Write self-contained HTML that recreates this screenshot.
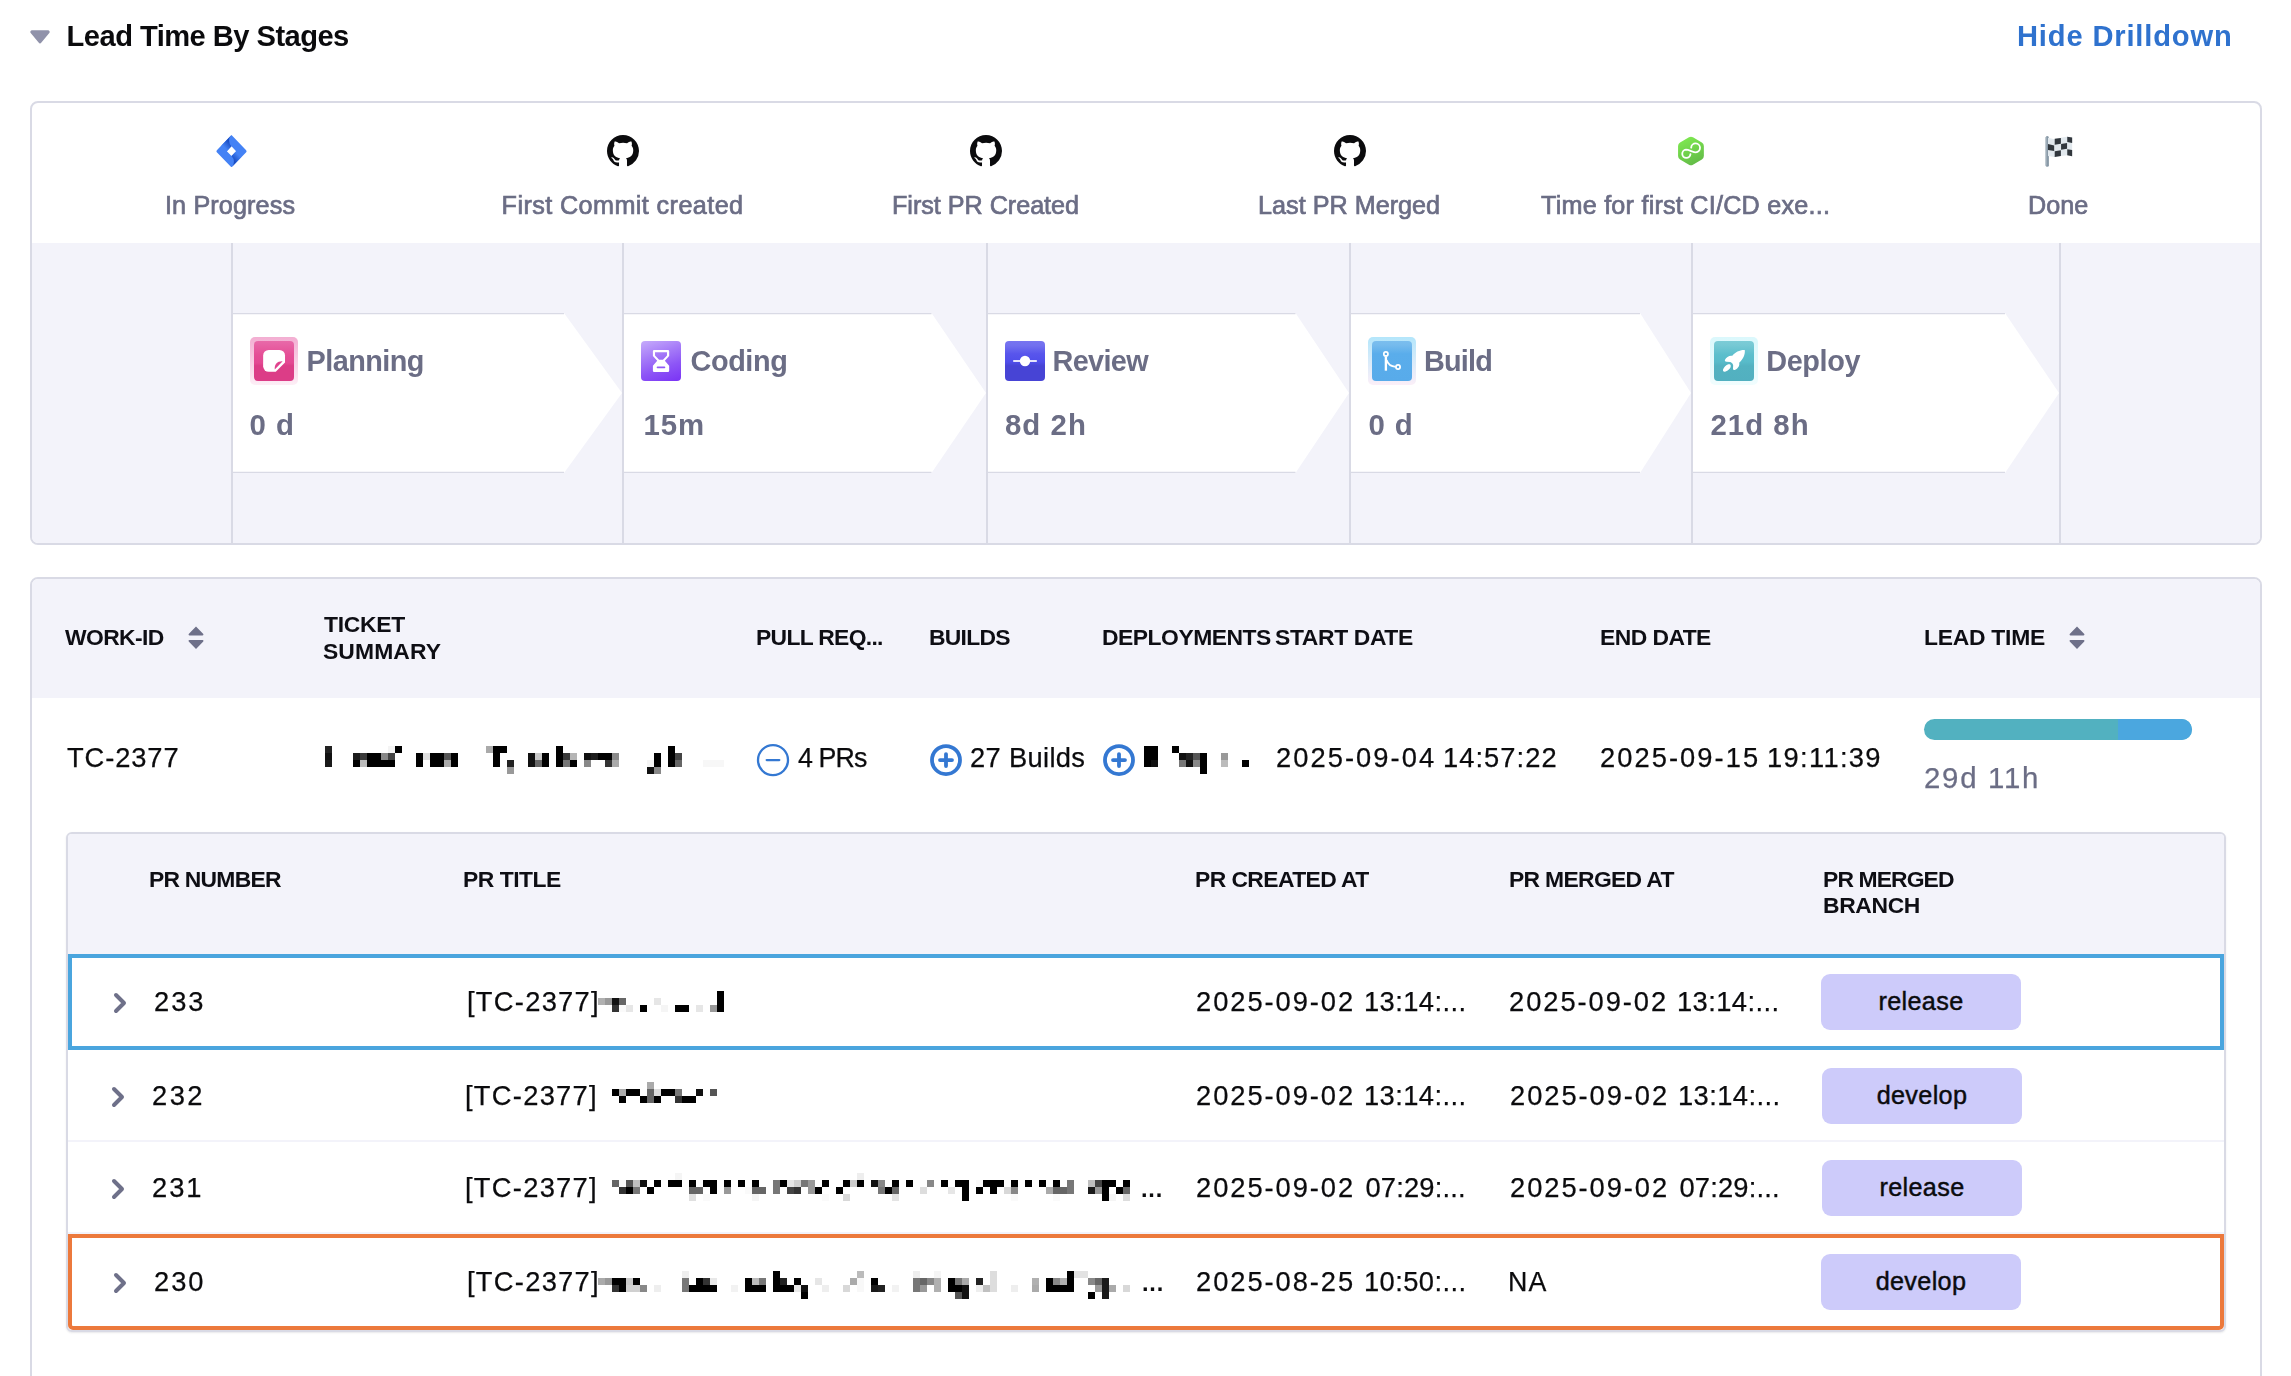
<!DOCTYPE html>
<html lang="en">
<head>
<meta charset="utf-8">
<title>Lead Time By Stages</title>
<style>
html,body{margin:0;padding:0;background:#fff;}
body{width:2291px;height:1376px;overflow:hidden;font-family:"Liberation Sans",sans-serif;}
#root{position:relative;width:2291px;height:1376px;overflow:hidden;background:#fff;}
.abs{position:absolute;}
.t{position:absolute;white-space:nowrap;}
.md{-webkit-text-stroke:0.7px currentColor;}
.rg{-webkit-text-stroke:0.25px currentColor;}
#txt{position:absolute;left:0;top:0;width:2291px;height:1376px;will-change:transform;}
.card{position:absolute;box-sizing:border-box;border:2px solid #d9dae5;border-radius:8px;background:#fff;}
.grey{position:absolute;background:#f3f3fa;}
.vline{position:absolute;width:2px;background:#d9dae5;top:243px;height:300px;}
.stage{position:absolute;top:313px;height:160px;}
.sicon{position:absolute;width:40px;height:40px;border-radius:4px;top:341px;}
.halo{position:absolute;width:48px;height:48px;border-radius:5px;top:337px;}
.badge{position:absolute;width:200px;height:56px;border-radius:9px;background:#cdcbfa;color:#0b0b0d;font-size:25.200px;line-height:55px;text-align:center;letter-spacing:.35px;-webkit-text-stroke:.45px #0b0b0d;}
.rowsep{position:absolute;left:68px;width:2156px;height:2px;background:#f3f3fa;}
</style>
</head>
<body>

<div id="root">
<!-- header caret -->
<svg class="abs" style="left:28px;top:26.400px" width="24" height="22" viewBox="0 0 24 22"><path d="M4 4.200h16a1.700 1.700 0 0 1 1.300 2.800l-7.900 9.600a1.800 1.800 0 0 1-2.800 0l-7.900-9.600a1.700 1.700 0 0 1 1.300-2.800z" fill="#9092aa"/></svg>

<!-- stages card -->
<div class="card" style="left:30px;top:101px;width:2232px;height:444px;overflow:hidden">
</div>
<div class="grey" style="left:32px;top:243px;width:2228px;height:300px;border-radius:0 0 6px 6px"></div>
<div class="vline" style="left:231px"></div>
<div class="vline" style="left:622px"></div>
<div class="vline" style="left:986px"></div>
<div class="vline" style="left:1349px"></div>
<div class="vline" style="left:1691px"></div>
<div class="vline" style="left:2059px"></div>

<!-- stage arrows -->
<svg class="abs" style="left:0;top:0" width="2291" height="560">
 <g fill="#fff" stroke="none">
  <path d="M233 313H564L622 393L564 473H233Z"/>
  <path d="M624 313H931.500L986 393L931.500 473H624Z"/>
  <path d="M988 313H1295.500L1349 393L1295.500 473H988Z"/>
  <path d="M1351 313H1640L1691 393L1640 473H1351Z"/>
  <path d="M1693 313H2005L2059 393L2005 473H1693Z"/>
 </g>
 <g fill="none" stroke="#d9dae5" stroke-width="1.200">
  <path d="M233 313.600H564M233 472.400H564"/>
  <path d="M624 313.600H931.500M624 472.400H931.500"/>
  <path d="M988 313.600H1295.500M988 472.400H1295.500"/>
  <path d="M1351 313.600H1640M1351 472.400H1640"/>
  <path d="M1693 313.600H2005M1693 472.400H2005"/>
 </g>
</svg>

<!-- table card -->
<div class="card" style="left:30px;top:577px;width:2232px;height:820px"></div>
<div class="grey" style="left:32px;top:579px;width:2228px;height:119px;border-radius:6px 6px 0 0"></div>

<!-- nested table -->
<div class="card" style="left:66px;top:832px;width:2160px;height:500px;border-radius:6px;box-shadow:0 1px 2px rgba(40,41,61,.10)"></div>
<div class="grey" style="left:68px;top:834px;width:2156px;height:120px;border-radius:4px 4px 0 0"></div>
<div class="rowsep" style="top:1140px"></div>
<div class="rowsep" style="top:1232px"></div>
<div class="abs" style="left:68px;top:954px;width:2156px;height:96px;box-sizing:border-box;border:4px solid #4aa5de"></div>
<div class="abs" style="left:68px;top:1234px;width:2156px;height:96px;box-sizing:border-box;border:4px solid #ec793c;border-radius:0 0 5px 5px"></div>

<div class="badge" style="left:1821px;top:974px">release</div>
<div class="badge" style="left:1822px;top:1068px">develop</div>
<div class="badge" style="left:1822px;top:1160px">release</div>
<div class="badge" style="left:1821px;top:1254px">develop</div>

<!-- lead time bar -->
<div class="abs" style="left:1924px;top:719px;width:268px;height:21px;border-radius:11px;overflow:hidden;background:#52b1c0"><div class="abs" style="left:194px;top:0;width:74px;height:21px;background:#4ba7df"></div></div>

<!-- Jira icon -->
<svg class="abs" style="left:216px;top:134.500px" width="31" height="32.400" viewBox="0 0 32 32" preserveAspectRatio="none">
 <defs>
  <linearGradient id="jg1" gradientUnits="userSpaceOnUse" x1="15" y1="6.500" x2="9" y2="12.500"><stop offset="0.15" stop-color="#1a4ec4"/><stop offset="1" stop-color="#4482f5"/></linearGradient>
  <linearGradient id="jg2" gradientUnits="userSpaceOnUse" x1="17" y1="25.500" x2="23" y2="19.500"><stop offset="0.15" stop-color="#1a4ec4"/><stop offset="1" stop-color="#4482f5"/></linearGradient>
 </defs>
 <path fill="#4482f5" fill-rule="evenodd" d="M16 0L30.900 14.700a1.850 1.850 0 0 1 0 2.600L16 32L1.100 17.300a1.850 1.850 0 0 1 0-2.600ZM16 11.200L11.200 16L16 20.800L20.800 16Z"/>
 <path fill="url(#jg1)" d="M16 11.200A7.600 7.600 0 0 1 16 0L5.600 10.400L11.200 16Z"/>
 <path fill="url(#jg2)" d="M16 20.800A7.600 7.600 0 0 1 16 32L26.400 21.600L20.800 16Z"/>
</svg>

<!-- GitHub icons -->
<svg class="abs" style="left:606.500px;top:134.700px" width="32" height="32" viewBox="0 0 16 16"><path fill="#0b0b0d" d="M8 0C3.580 0 0 3.580 0 8c0 3.540 2.290 6.530 5.470 7.590.4.070.550-.170.550-.380 0-.190-.010-.820-.010-1.490-2.010.370-2.530-.490-2.690-.940-.090-.230-.480-.940-.820-1.130-.280-.150-.680-.520-.010-.530.630-.010 1.080.580 1.230.820.720 1.210 1.870.870 2.330.660.070-.520.280-.870.510-1.070-1.780-.2-3.640-.890-3.640-3.950 0-.870.310-1.590.820-2.150-.080-.2-.360-1.020.080-2.120 0 0 .670-.210 2.200.820.640-.180 1.320-.270 2-.270.680 0 1.360.090 2 .270 1.530-1.040 2.200-.820 2.200-.820.440 1.100.160 1.920.080 2.120.510.560.820 1.270.820 2.150 0 3.070-1.870 3.750-3.650 3.950.290.250.540.730.540 1.480 0 1.070-.010 1.930-.010 2.200 0 .210.150.460.550.380A8.013 8.013 0 0 0 16 8c0-4.420-3.580-8-8-8z"/></svg>
<svg class="abs" style="left:969.700px;top:134.700px" width="32" height="32" viewBox="0 0 16 16"><path fill="#0b0b0d" d="M8 0C3.580 0 0 3.580 0 8c0 3.540 2.290 6.530 5.470 7.590.4.070.550-.170.550-.380 0-.190-.010-.820-.010-1.490-2.010.370-2.530-.490-2.690-.940-.090-.230-.480-.940-.820-1.130-.280-.150-.680-.520-.010-.530.630-.010 1.080.580 1.230.820.720 1.210 1.870.870 2.330.660.070-.520.280-.870.510-1.070-1.780-.2-3.640-.890-3.640-3.950 0-.870.310-1.590.820-2.150-.080-.2-.360-1.020.080-2.120 0 0 .670-.210 2.200.820.640-.180 1.320-.270 2-.270.680 0 1.360.090 2 .270 1.530-1.040 2.200-.820 2.200-.820.440 1.100.160 1.920.080 2.120.510.560.820 1.270.820 2.150 0 3.070-1.870 3.750-3.650 3.950.290.250.540.730.540 1.480 0 1.070-.010 1.930-.010 2.200 0 .210.150.460.550.380A8.013 8.013 0 0 0 16 8c0-4.420-3.580-8-8-8z"/></svg>
<svg class="abs" style="left:1333.700px;top:134.700px" width="32" height="32" viewBox="0 0 16 16"><path fill="#0b0b0d" d="M8 0C3.580 0 0 3.580 0 8c0 3.540 2.290 6.530 5.470 7.590.4.070.550-.170.550-.380 0-.190-.010-.820-.010-1.490-2.010.370-2.530-.490-2.690-.940-.090-.230-.480-.940-.820-1.130-.280-.150-.680-.520-.010-.530.630-.010 1.080.580 1.230.820.720 1.210 1.870.870 2.330.660.070-.520.280-.870.510-1.070-1.780-.2-3.640-.890-3.640-3.950 0-.870.310-1.590.820-2.150-.080-.2-.360-1.020.080-2.120 0 0 .670-.210 2.200.820.640-.180 1.320-.270 2-.270.680 0 1.360.090 2 .270 1.530-1.040 2.200-.820 2.200-.820.440 1.100.160 1.920.080 2.120.510.560.820 1.270.820 2.150 0 3.070-1.870 3.750-3.650 3.950.290.250.540.730.540 1.480 0 1.070-.010 1.930-.010 2.200 0 .210.150.460.550.380A8.013 8.013 0 0 0 16 8c0-4.420-3.580-8-8-8z"/></svg>

<!-- CI/CD green hex -->
<svg class="abs" style="left:1660px;top:125px" width="60" height="50" viewBox="0 0 1651 1376">
 <defs><linearGradient id="hg" gradientUnits="userSpaceOnUse" x1="650" y1="330" x2="1000" y2="1100"><stop offset="0" stop-color="#7fea50"/><stop offset="1" stop-color="#62ba47"/></linearGradient></defs>
 <path d="M852 435L1097 576V856L852 997L607 856V576Z" fill="url(#hg)" stroke="url(#hg)" stroke-width="220" stroke-linejoin="round"/>
 <path d="M858 622A122 122 0 1 1 985 752C920 752 790 680 715 680A113 113 0 1 0 838 800" fill="none" stroke="#fff" stroke-width="50" stroke-linecap="round"/>
</svg>

<!-- Flag -->
<svg class="abs" style="left:2030px;top:125px" width="60" height="50" viewBox="0 0 1651 1376">
 <rect x="430" y="305" width="90" height="845" rx="45" fill="#8899a6"/>
 <rect x="430" y="330" width="34" height="790" rx="17" fill="#a3b1bc"/>
 <path d="M495 350L670 390L850 350L1020 320L1160 345V860L1020 830L850 850L670 880L495 850Z" fill="#e1e8ed"/>
 <g fill="#31373d">
  <path d="M680 375L850 355V515L680 545Z"/>
  <path d="M1025 325L1160 345V495L1025 470Z"/>
  <path d="M495 525L665 565V715L495 685Z"/>
  <path d="M855 520L1020 495V655L855 680Z"/>
  <path d="M680 725L850 695V850L680 880Z"/>
  <path d="M1025 665L1160 690V860L1025 830Z"/>
 </g>
</svg>

<!-- Stage icons -->
<div class="halo" style="left:250px;background:linear-gradient(#f3aed2,#fdeff6)"></div>
<div class="sicon" style="left:254px;background:linear-gradient(#e86aa9 0%,#e54e96 35%,#e34892 55%,#dc3d87 62%,#dc3d87 100%)"></div>
<svg class="abs" style="left:240px;top:325px" width="70" height="70" viewBox="0 0 1376 1376">
 <path fill="#fff" d="M565 490H775A110 110 0 0 1 885 600V738L703 920H565A110 110 0 0 1 455 810V600A110 110 0 0 1 565 490Z"/>
 <path fill="#e0438e" d="M684 874C668 778 738 708 838 714Z"/>
</svg>

<div class="sicon" style="left:641px;background:linear-gradient(160deg,#c6acfb 0%,#a67cf8 35%,#8d55f6 65%,#7a33f5 100%)"></div>
<svg class="abs" style="left:630px;top:325px" width="70" height="70" viewBox="0 0 1376 1376">
 <path fill="#fff" fill-rule="evenodd" d="M475 490H745Q770 490 770 515V610L685 705L770 800V900Q770 925 745 925H475Q450 925 450 900V800L535 705L450 610V515Q450 490 475 490ZM492 535V598L572 682H648L727 598V535ZM540 818H678a16 16 0 0 1 0 32H540a16 16 0 0 1 0-32Z"/>
</svg>

<div class="sicon" style="left:1005px;background:linear-gradient(#7774f0 0%,#7270ef 12%,#5855ec 32%,#504eea 52%,#4744d5 62%,#4744d5 100%)"></div>
<svg class="abs" style="left:995px;top:325px" width="70" height="70" viewBox="0 0 1376 1376">
 <rect x="355" y="688" width="470" height="40" rx="14" fill="#e6e4fb"/>
 <circle cx="590" cy="708" r="102" fill="#fff"/>
</svg>

<div class="halo" style="left:1368px;background:linear-gradient(#b3e6fb,#fbeff8)"></div>
<div class="sicon" style="left:1372px;background:linear-gradient(#7bbeee 0%,#76bbed 10%,#5aadeb 32%,#58abea 100%)"></div>
<svg class="abs" style="left:1358px;top:325px" width="70" height="70" viewBox="0 0 1376 1376">
 <g fill="none" stroke="#fff">
  <circle cx="548" cy="568" r="41" stroke-width="34"/>
  <path d="M548 615V898" stroke-width="46"/>
  <path d="M562 690Q600 815 742 822" stroke-width="36"/>
  <circle cx="787" cy="825" r="41" stroke-width="34"/>
 </g>
</svg>

<div class="halo" style="left:1710px;background:linear-gradient(#dbf8fc,#f1fdfe)"></div>
<div class="sicon" style="left:1714px;background:linear-gradient(#7cccd6 0%,#77c9d4 10%,#5bbecc 35%,#58bbca 52%,#53b2c1 62%,#52b0c0 100%)"></div>
<svg class="abs" style="left:1700px;top:325px" width="70" height="70" viewBox="0 0 1376 1376">
 <path fill="#fff" d="M880 490C790 484 690 530 635 605C585 592 515 625 490 690C484 712 498 724 520 724L598 726C632 742 650 764 652 795L648 862C650 884 672 892 692 882C752 852 784 792 770 742C842 676 892 582 880 490Z"/>
 <path fill="#fff" d="M585 772C528 764 474 818 452 882C448 910 466 924 492 918C556 898 606 852 604 800C604 784 598 776 585 772Z"/>
</svg>

<!-- sort icons -->
<svg class="abs" style="left:188px;top:625.800px" width="16" height="24" viewBox="0 0 16 24"><path fill="#6e7089" d="M8 .5L15.300 8Q15.900 9.400 14.500 9.400H1.500Q.1 9.400.7 8ZM8 23L.7 15.500Q.1 14.100 1.500 14.100H14.500Q15.900 14.100 15.300 15.500Z"/></svg>
<svg class="abs" style="left:2069px;top:625.800px" width="16" height="24" viewBox="0 0 16 24"><path fill="#6e7089" d="M8 .5L15.300 8Q15.900 9.400 14.500 9.400H1.500Q.1 9.400.7 8ZM8 23L.7 15.500Q.1 14.100 1.500 14.100H14.500Q15.900 14.100 15.300 15.500Z"/></svg>

<!-- circle minus / plus -->
<svg class="abs" style="left:755px;top:742px" width="36" height="36" viewBox="0 0 36 36"><circle cx="18" cy="18.100" r="15" fill="none" stroke="#3478d2" stroke-width="2.300"/><path d="M11.700 18.100H24.300" stroke="#3478d2" stroke-width="2.300" stroke-linecap="round"/></svg>
<svg class="abs" style="left:927.700px;top:742px" width="36" height="36" viewBox="0 0 36 36"><g fill="none" stroke="#3478d2" stroke-width="3.800"><circle cx="18" cy="18.100" r="14"/><path d="M12 18.100H24M18 12.100V24.100" stroke-linecap="round"/></g></svg>
<svg class="abs" style="left:1100.700px;top:742px" width="36" height="36" viewBox="0 0 36 36"><g fill="none" stroke="#3478d2" stroke-width="3.800"><circle cx="18" cy="18.100" r="14"/><path d="M12 18.100H24M18 12.100V24.100" stroke-linecap="round"/></g></svg>

<!-- chevrons -->
<svg class="abs" style="left:110px;top:990px" width="20" height="26" viewBox="0 0 20 26"><path d="M6 5L14 13L6 21" fill="none" stroke="#6e7089" stroke-width="4" stroke-linecap="round" stroke-linejoin="round"/></svg>
<svg class="abs" style="left:108px;top:1084px" width="20" height="26" viewBox="0 0 20 26"><path d="M6 5L14 13L6 21" fill="none" stroke="#6e7089" stroke-width="4" stroke-linecap="round" stroke-linejoin="round"/></svg>
<svg class="abs" style="left:108px;top:1176px" width="20" height="26" viewBox="0 0 20 26"><path d="M6 5L14 13L6 21" fill="none" stroke="#6e7089" stroke-width="4" stroke-linecap="round" stroke-linejoin="round"/></svg>
<svg class="abs" style="left:110px;top:1270px" width="20" height="26" viewBox="0 0 20 26"><path d="M6 5L14 13L6 21" fill="none" stroke="#6e7089" stroke-width="4" stroke-linecap="round" stroke-linejoin="round"/></svg>

<svg class="abs" style="left:0;top:0" width="2291" height="1376" shape-rendering="crispEdges"><rect x="325" y="746" width="7" height="7" fill="#222"/><rect x="388" y="746" width="7" height="7" fill="#f4f4f4"/><rect x="395" y="746" width="7" height="7" fill="#000"/><rect x="486" y="746" width="7" height="7" fill="#aaa"/><rect x="493" y="746" width="14" height="7" fill="#000"/><rect x="556" y="746" width="7" height="7" fill="#000"/><rect x="668" y="746" width="7" height="7" fill="#000"/><rect x="325" y="753" width="7" height="7" fill="#111"/><rect x="353" y="753" width="7" height="7" fill="#1c1c1c"/><rect x="360" y="753" width="7" height="7" fill="#3a3a3a"/><rect x="367" y="753" width="14" height="7" fill="#000"/><rect x="381" y="753" width="7" height="7" fill="#888"/><rect x="388" y="753" width="7" height="7" fill="#444"/><rect x="416" y="753" width="7" height="7" fill="#000"/><rect x="423" y="753" width="7" height="7" fill="#ddd"/><rect x="430" y="753" width="14" height="7" fill="#000"/><rect x="444" y="753" width="7" height="7" fill="#555"/><rect x="451" y="753" width="7" height="7" fill="#000"/><rect x="493" y="753" width="7" height="7" fill="#000"/><rect x="528" y="753" width="7" height="7" fill="#111"/><rect x="535" y="753" width="7" height="7" fill="#c8c8c8"/><rect x="542" y="753" width="7" height="7" fill="#000"/><rect x="556" y="753" width="7" height="7" fill="#000"/><rect x="563" y="753" width="7" height="7" fill="#3a3a3a"/><rect x="570" y="753" width="7" height="7" fill="#b5b5b5"/><rect x="584" y="753" width="7" height="7" fill="#111"/><rect x="591" y="753" width="7" height="7" fill="#1c1c1c"/><rect x="598" y="753" width="14" height="7" fill="#000"/><rect x="612" y="753" width="7" height="7" fill="#8a8a8a"/><rect x="654" y="753" width="7" height="7" fill="#000"/><rect x="668" y="753" width="7" height="7" fill="#000"/><rect x="675" y="753" width="7" height="7" fill="#444"/><rect x="325" y="760" width="7" height="7" fill="#1a1a1a"/><rect x="353" y="760" width="7" height="7" fill="#000"/><rect x="360" y="760" width="7" height="7" fill="#bbb"/><rect x="367" y="760" width="28" height="7" fill="#000"/><rect x="416" y="760" width="7" height="7" fill="#000"/><rect x="430" y="760" width="14" height="7" fill="#000"/><rect x="444" y="760" width="7" height="7" fill="#aaa"/><rect x="451" y="760" width="7" height="7" fill="#000"/><rect x="493" y="760" width="7" height="7" fill="#000"/><rect x="507" y="760" width="7" height="7" fill="#222"/><rect x="528" y="760" width="7" height="7" fill="#111"/><rect x="535" y="760" width="7" height="7" fill="#666"/><rect x="542" y="760" width="7" height="7" fill="#000"/><rect x="556" y="760" width="7" height="7" fill="#000"/><rect x="563" y="760" width="7" height="7" fill="#777"/><rect x="570" y="760" width="7" height="7" fill="#000"/><rect x="584" y="760" width="7" height="7" fill="#888"/><rect x="605" y="760" width="7" height="7" fill="#333"/><rect x="612" y="760" width="7" height="7" fill="#aaa"/><rect x="647" y="760" width="7" height="7" fill="#f5f5f5"/><rect x="654" y="760" width="7" height="7" fill="#000"/><rect x="668" y="760" width="7" height="7" fill="#000"/><rect x="675" y="760" width="7" height="7" fill="#666"/><rect x="703" y="760" width="21" height="7" fill="#f7f7f7"/><rect x="507" y="767" width="7" height="7" fill="#999"/><rect x="647" y="767" width="7" height="7" fill="#111"/><rect x="654" y="767" width="7" height="7" fill="#888"/><rect x="1144" y="746" width="14" height="7" fill="#000"/><rect x="1172" y="746" width="7" height="7" fill="#000"/><rect x="1144" y="753" width="14" height="7" fill="#000"/><rect x="1179" y="753" width="7" height="7" fill="#111"/><rect x="1186" y="753" width="7" height="7" fill="#222"/><rect x="1193" y="753" width="7" height="7" fill="#555"/><rect x="1200" y="753" width="7" height="7" fill="#000"/><rect x="1221" y="753" width="7" height="7" fill="#999"/><rect x="1144" y="760" width="7" height="7" fill="#000"/><rect x="1151" y="760" width="7" height="7" fill="#111"/><rect x="1179" y="760" width="7" height="7" fill="#777"/><rect x="1186" y="760" width="7" height="7" fill="#111"/><rect x="1193" y="760" width="7" height="7" fill="#888"/><rect x="1200" y="760" width="7" height="7" fill="#000"/><rect x="1221" y="760" width="7" height="7" fill="#bbb"/><rect x="1242" y="760" width="7" height="7" fill="#000"/><rect x="1200" y="767" width="7" height="7" fill="#000"/><rect x="717" y="991" width="7" height="7" fill="#000"/><rect x="598" y="998" width="7" height="7" fill="#b0b0b0"/><rect x="605" y="998" width="7" height="7" fill="#999"/><rect x="612" y="998" width="7" height="7" fill="#111"/><rect x="619" y="998" width="7" height="7" fill="#666"/><rect x="654" y="998" width="7" height="7" fill="#e6e6e6"/><rect x="717" y="998" width="7" height="7" fill="#000"/><rect x="612" y="1005" width="7" height="7" fill="#333"/><rect x="619" y="1005" width="7" height="7" fill="#fafafa"/><rect x="626" y="1005" width="7" height="7" fill="#e6e6e6"/><rect x="640" y="1005" width="7" height="7" fill="#000"/><rect x="661" y="1005" width="7" height="7" fill="#f5f5f5"/><rect x="675" y="1005" width="14" height="7" fill="#000"/><rect x="696" y="1005" width="7" height="7" fill="#e6e6e6"/><rect x="710" y="1005" width="7" height="7" fill="#999"/><rect x="717" y="1005" width="7" height="7" fill="#000"/><rect x="647" y="1082" width="7" height="7" fill="#aaa"/><rect x="612" y="1089" width="7" height="7" fill="#000"/><rect x="619" y="1089" width="7" height="7" fill="#aaa"/><rect x="626" y="1089" width="14" height="7" fill="#000"/><rect x="647" y="1089" width="7" height="7" fill="#666"/><rect x="654" y="1089" width="7" height="7" fill="#ddd"/><rect x="661" y="1089" width="14" height="7" fill="#000"/><rect x="675" y="1089" width="7" height="7" fill="#777"/><rect x="696" y="1089" width="7" height="7" fill="#111"/><rect x="710" y="1089" width="7" height="7" fill="#555"/><rect x="619" y="1096" width="7" height="7" fill="#000"/><rect x="640" y="1096" width="7" height="7" fill="#000"/><rect x="647" y="1096" width="7" height="7" fill="#666"/><rect x="654" y="1096" width="7" height="7" fill="#000"/><rect x="675" y="1096" width="7" height="7" fill="#333"/><rect x="682" y="1096" width="14" height="7" fill="#000"/><rect x="675" y="1173" width="7" height="7" fill="#f5f5f5"/><rect x="857" y="1173" width="7" height="7" fill="#eee"/><rect x="612" y="1180" width="7" height="7" fill="#666"/><rect x="619" y="1180" width="7" height="7" fill="#fafafa"/><rect x="626" y="1180" width="7" height="7" fill="#555"/><rect x="633" y="1180" width="7" height="7" fill="#c0c0c0"/><rect x="640" y="1180" width="7" height="7" fill="#111"/><rect x="654" y="1180" width="7" height="7" fill="#000"/><rect x="668" y="1180" width="14" height="7" fill="#000"/><rect x="689" y="1180" width="7" height="7" fill="#000"/><rect x="703" y="1180" width="14" height="7" fill="#000"/><rect x="724" y="1180" width="7" height="7" fill="#000"/><rect x="738" y="1180" width="7" height="7" fill="#000"/><rect x="752" y="1180" width="7" height="7" fill="#000"/><rect x="773" y="1180" width="7" height="7" fill="#777"/><rect x="780" y="1180" width="7" height="7" fill="#000"/><rect x="787" y="1180" width="7" height="7" fill="#e6e6e6"/><rect x="794" y="1180" width="7" height="7" fill="#d0d0d0"/><rect x="801" y="1180" width="7" height="7" fill="#777"/><rect x="808" y="1180" width="7" height="7" fill="#999"/><rect x="822" y="1180" width="7" height="7" fill="#000"/><rect x="843" y="1180" width="7" height="7" fill="#000"/><rect x="850" y="1180" width="7" height="7" fill="#ccc"/><rect x="857" y="1180" width="7" height="7" fill="#000"/><rect x="871" y="1180" width="7" height="7" fill="#111"/><rect x="878" y="1180" width="7" height="7" fill="#888"/><rect x="892" y="1180" width="7" height="7" fill="#000"/><rect x="906" y="1180" width="7" height="7" fill="#000"/><rect x="927" y="1180" width="7" height="7" fill="#888"/><rect x="941" y="1180" width="7" height="7" fill="#000"/><rect x="955" y="1180" width="14" height="7" fill="#000"/><rect x="976" y="1180" width="7" height="7" fill="#fafafa"/><rect x="983" y="1180" width="21" height="7" fill="#000"/><rect x="1011" y="1180" width="7" height="7" fill="#000"/><rect x="1025" y="1180" width="7" height="7" fill="#000"/><rect x="1039" y="1180" width="7" height="7" fill="#000"/><rect x="1053" y="1180" width="7" height="7" fill="#000"/><rect x="1067" y="1180" width="7" height="7" fill="#777"/><rect x="1088" y="1180" width="7" height="7" fill="#c0c0c0"/><rect x="1095" y="1180" width="7" height="7" fill="#444"/><rect x="1102" y="1180" width="14" height="7" fill="#000"/><rect x="1123" y="1180" width="7" height="7" fill="#000"/><rect x="619" y="1187" width="7" height="7" fill="#333"/><rect x="626" y="1187" width="7" height="7" fill="#000"/><rect x="633" y="1187" width="7" height="7" fill="#777"/><rect x="647" y="1187" width="7" height="7" fill="#000"/><rect x="689" y="1187" width="7" height="7" fill="#666"/><rect x="696" y="1187" width="7" height="7" fill="#666"/><rect x="710" y="1187" width="7" height="7" fill="#000"/><rect x="724" y="1187" width="7" height="7" fill="#999"/><rect x="745" y="1187" width="7" height="7" fill="#fafafa"/><rect x="752" y="1187" width="7" height="7" fill="#666"/><rect x="759" y="1187" width="7" height="7" fill="#666"/><rect x="773" y="1187" width="7" height="7" fill="#777"/><rect x="787" y="1187" width="7" height="7" fill="#444"/><rect x="794" y="1187" width="7" height="7" fill="#333"/><rect x="808" y="1187" width="7" height="7" fill="#999"/><rect x="815" y="1187" width="7" height="7" fill="#000"/><rect x="836" y="1187" width="7" height="7" fill="#000"/><rect x="878" y="1187" width="7" height="7" fill="#777"/><rect x="885" y="1187" width="7" height="7" fill="#000"/><rect x="892" y="1187" width="7" height="7" fill="#666"/><rect x="920" y="1187" width="7" height="7" fill="#ddd"/><rect x="948" y="1187" width="7" height="7" fill="#e6e6e6"/><rect x="962" y="1187" width="7" height="7" fill="#000"/><rect x="976" y="1187" width="7" height="7" fill="#000"/><rect x="990" y="1187" width="7" height="7" fill="#000"/><rect x="1004" y="1187" width="7" height="7" fill="#d8d8d8"/><rect x="1011" y="1187" width="7" height="7" fill="#888"/><rect x="1046" y="1187" width="7" height="7" fill="#aaa"/><rect x="1053" y="1187" width="7" height="7" fill="#666"/><rect x="1060" y="1187" width="7" height="7" fill="#666"/><rect x="1067" y="1187" width="7" height="7" fill="#777"/><rect x="1088" y="1187" width="7" height="7" fill="#1a1a1a"/><rect x="1095" y="1187" width="7" height="7" fill="#999"/><rect x="1102" y="1187" width="7" height="7" fill="#000"/><rect x="1116" y="1187" width="7" height="7" fill="#000"/><rect x="1123" y="1187" width="7" height="7" fill="#666"/><rect x="689" y="1194" width="7" height="7" fill="#e0e0e0"/><rect x="703" y="1194" width="7" height="7" fill="#fafafa"/><rect x="752" y="1194" width="7" height="7" fill="#f5f5f5"/><rect x="822" y="1194" width="7" height="7" fill="#fafafa"/><rect x="843" y="1194" width="7" height="7" fill="#d8d8d8"/><rect x="892" y="1194" width="7" height="7" fill="#e4e4e4"/><rect x="962" y="1194" width="7" height="7" fill="#000"/><rect x="1011" y="1194" width="7" height="7" fill="#fafafa"/><rect x="1053" y="1194" width="7" height="7" fill="#fafafa"/><rect x="1102" y="1194" width="7" height="7" fill="#000"/><rect x="1109" y="1194" width="7" height="7" fill="#f5f5f5"/><rect x="1123" y="1194" width="7" height="7" fill="#ddd"/><rect x="682" y="1271" width="7" height="7" fill="#eee"/><rect x="773" y="1271" width="7" height="7" fill="#000"/><rect x="857" y="1271" width="7" height="7" fill="#bbb"/><rect x="913" y="1271" width="7" height="7" fill="#eee"/><rect x="934" y="1271" width="7" height="7" fill="#f5f5f5"/><rect x="990" y="1271" width="7" height="7" fill="#ddd"/><rect x="1067" y="1271" width="7" height="7" fill="#000"/><rect x="1074" y="1271" width="14" height="7" fill="#e2e2e2"/><rect x="598" y="1278" width="7" height="7" fill="#aaa"/><rect x="605" y="1278" width="7" height="7" fill="#999"/><rect x="612" y="1278" width="14" height="7" fill="#000"/><rect x="626" y="1278" width="7" height="7" fill="#c8c8c8"/><rect x="633" y="1278" width="7" height="7" fill="#000"/><rect x="682" y="1278" width="7" height="7" fill="#777"/><rect x="696" y="1278" width="7" height="7" fill="#000"/><rect x="703" y="1278" width="7" height="7" fill="#333"/><rect x="710" y="1278" width="7" height="7" fill="#e8e8e8"/><rect x="745" y="1278" width="7" height="7" fill="#000"/><rect x="752" y="1278" width="7" height="7" fill="#bbb"/><rect x="759" y="1278" width="7" height="7" fill="#777"/><rect x="773" y="1278" width="7" height="7" fill="#000"/><rect x="780" y="1278" width="7" height="7" fill="#222"/><rect x="794" y="1278" width="7" height="7" fill="#000"/><rect x="815" y="1278" width="7" height="7" fill="#e6e6e6"/><rect x="850" y="1278" width="7" height="7" fill="#aaa"/><rect x="857" y="1278" width="7" height="7" fill="#f8f8f8"/><rect x="871" y="1278" width="7" height="7" fill="#000"/><rect x="913" y="1278" width="7" height="7" fill="#777"/><rect x="920" y="1278" width="7" height="7" fill="#666"/><rect x="927" y="1278" width="7" height="7" fill="#888"/><rect x="934" y="1278" width="7" height="7" fill="#b0b0b0"/><rect x="948" y="1278" width="7" height="7" fill="#000"/><rect x="955" y="1278" width="7" height="7" fill="#777"/><rect x="962" y="1278" width="7" height="7" fill="#aaa"/><rect x="976" y="1278" width="7" height="7" fill="#222"/><rect x="990" y="1278" width="7" height="7" fill="#ddd"/><rect x="1032" y="1278" width="7" height="7" fill="#b0b0b0"/><rect x="1046" y="1278" width="7" height="7" fill="#000"/><rect x="1053" y="1278" width="7" height="7" fill="#888"/><rect x="1060" y="1278" width="7" height="7" fill="#b0b0b0"/><rect x="1067" y="1278" width="7" height="7" fill="#000"/><rect x="1088" y="1278" width="7" height="7" fill="#888"/><rect x="1095" y="1278" width="7" height="7" fill="#666"/><rect x="1102" y="1278" width="7" height="7" fill="#1a1a1a"/><rect x="612" y="1285" width="7" height="7" fill="#333"/><rect x="619" y="1285" width="7" height="7" fill="#000"/><rect x="626" y="1285" width="14" height="7" fill="#d0d0d0"/><rect x="640" y="1285" width="7" height="7" fill="#888"/><rect x="654" y="1285" width="7" height="7" fill="#eee"/><rect x="682" y="1285" width="7" height="7" fill="#777"/><rect x="689" y="1285" width="28" height="7" fill="#000"/><rect x="731" y="1285" width="7" height="7" fill="#f2f2f2"/><rect x="745" y="1285" width="21" height="7" fill="#000"/><rect x="773" y="1285" width="21" height="7" fill="#000"/><rect x="794" y="1285" width="7" height="7" fill="#e8e8e8"/><rect x="801" y="1285" width="7" height="7" fill="#111"/><rect x="822" y="1285" width="7" height="7" fill="#eee"/><rect x="843" y="1285" width="7" height="7" fill="#d8d8d8"/><rect x="857" y="1285" width="7" height="7" fill="#f8f8f8"/><rect x="871" y="1285" width="7" height="7" fill="#1a1a1a"/><rect x="878" y="1285" width="7" height="7" fill="#222"/><rect x="892" y="1285" width="7" height="7" fill="#f2f2f2"/><rect x="913" y="1285" width="7" height="7" fill="#777"/><rect x="920" y="1285" width="7" height="7" fill="#999"/><rect x="934" y="1285" width="7" height="7" fill="#b0b0b0"/><rect x="948" y="1285" width="14" height="7" fill="#000"/><rect x="962" y="1285" width="7" height="7" fill="#111"/><rect x="976" y="1285" width="7" height="7" fill="#eee"/><rect x="983" y="1285" width="7" height="7" fill="#c0c0c0"/><rect x="990" y="1285" width="7" height="7" fill="#ddd"/><rect x="1011" y="1285" width="7" height="7" fill="#eee"/><rect x="1032" y="1285" width="7" height="7" fill="#aaa"/><rect x="1046" y="1285" width="28" height="7" fill="#000"/><rect x="1095" y="1285" width="7" height="7" fill="#999"/><rect x="1102" y="1285" width="7" height="7" fill="#1a1a1a"/><rect x="1109" y="1285" width="7" height="7" fill="#aaa"/><rect x="1123" y="1285" width="7" height="7" fill="#d8d8d8"/><rect x="801" y="1292" width="7" height="7" fill="#000"/><rect x="955" y="1292" width="7" height="7" fill="#555"/><rect x="962" y="1292" width="7" height="7" fill="#111"/><rect x="1088" y="1292" width="7" height="7" fill="#000"/><rect x="1102" y="1292" width="7" height="7" fill="#1a1a1a"/></svg>
<div id="txt">
<span class="t" id="title" style="left:66.60px;top:22.3px;font-size:29.12px;line-height:29.12px;font-weight:700;color:#0b0b0d;letter-spacing:-0.533px">Lead Time By Stages</span>
<span class="t" id="hide" style="left:2017.00px;top:22.3px;font-size:29.12px;line-height:29.12px;font-weight:700;color:#2f72ce;letter-spacing:0.843px">Hide Drilldown</span>
<span class="t md" id="l1" style="left:165.00px;top:192.7px;font-size:25.2px;line-height:25.2px;font-weight:400;color:#6b6d85;letter-spacing:0.124px">In Progress</span>
<span class="t md" id="l2" style="left:501.60px;top:192.7px;font-size:25.2px;line-height:25.2px;font-weight:400;color:#6b6d85;letter-spacing:0.407px">First Commit created</span>
<span class="t md" id="l3" style="left:892.00px;top:192.7px;font-size:25.2px;line-height:25.2px;font-weight:400;color:#6b6d85;letter-spacing:-0.032px">First PR Created</span>
<span class="t md" id="l4" style="left:1258.00px;top:192.7px;font-size:25.2px;line-height:25.2px;font-weight:400;color:#6b6d85;letter-spacing:0.006px">Last PR Merged</span>
<span class="t md" id="l5" style="left:1541.00px;top:192.7px;font-size:25.2px;line-height:25.2px;font-weight:400;color:#6b6d85;letter-spacing:0.221px">Time for first CI/CD exe...</span>
<span class="t md" id="l6" style="left:2028.00px;top:192.7px;font-size:25.2px;line-height:25.2px;font-weight:400;color:#6b6d85;letter-spacing:-0.015px">Done</span>
<span class="t" id="s1" style="left:306.60px;top:346.6px;font-size:28.84px;line-height:28.84px;font-weight:700;color:#6b6d85;letter-spacing:-0.550px">Planning</span>
<span class="t" id="s2" style="left:690.50px;top:346.6px;font-size:28.84px;line-height:28.84px;font-weight:700;color:#6b6d85;letter-spacing:-0.388px">Coding</span>
<span class="t" id="s3" style="left:1052.60px;top:346.6px;font-size:28.84px;line-height:28.84px;font-weight:700;color:#6b6d85;letter-spacing:-0.676px">Review</span>
<span class="t" id="s4" style="left:1424.00px;top:346.6px;font-size:28.84px;line-height:28.84px;font-weight:700;color:#6b6d85;letter-spacing:-0.819px">Build</span>
<span class="t" id="s5" style="left:1766.20px;top:346.6px;font-size:28.84px;line-height:28.84px;font-weight:700;color:#6b6d85;letter-spacing:-0.350px">Deploy</span>
<span class="t" id="v1" style="left:249.50px;top:410.1px;font-size:29.4px;line-height:29.4px;font-weight:700;color:#6b6d85;letter-spacing:0.953px">0 d</span>
<span class="t" id="v2" style="left:643.60px;top:410.1px;font-size:29.4px;line-height:29.4px;font-weight:700;color:#6b6d85;letter-spacing:0.899px">15m</span>
<span class="t" id="v3" style="left:1005.00px;top:410.1px;font-size:29.4px;line-height:29.4px;font-weight:700;color:#6b6d85;letter-spacing:1.024px">8d 2h</span>
<span class="t" id="v4" style="left:1368.40px;top:410.1px;font-size:29.4px;line-height:29.4px;font-weight:700;color:#6b6d85;letter-spacing:0.953px">0 d</span>
<span class="t" id="v5" style="left:1710.40px;top:410.1px;font-size:29.4px;line-height:29.4px;font-weight:700;color:#6b6d85;letter-spacing:1.042px">21d 8h</span>
<span class="t" id="h1" style="left:65.00px;top:626.4px;font-size:22.88px;line-height:22.88px;font-weight:700;color:#0e0e14;letter-spacing:-0.603px">WORK-ID</span>
<span class="t" id="h2a" style="left:324.00px;top:613.2px;font-size:22.88px;line-height:22.88px;font-weight:700;color:#0e0e14;letter-spacing:-0.293px">TICKET</span>
<span class="t" id="h2b" style="left:323.00px;top:640.2px;font-size:22.88px;line-height:22.88px;font-weight:700;color:#0e0e14;letter-spacing:0.114px">SUMMARY</span>
<span class="t" id="h3" style="left:756.00px;top:626.4px;font-size:22.88px;line-height:22.88px;font-weight:700;color:#0e0e14;letter-spacing:-0.687px">PULL REQ...</span>
<span class="t" id="h4" style="left:929.00px;top:626.4px;font-size:22.88px;line-height:22.88px;font-weight:700;color:#0e0e14;letter-spacing:-0.738px">BUILDS</span>
<span class="t" id="h5" style="left:1102.00px;top:626.4px;font-size:22.88px;line-height:22.88px;font-weight:700;color:#0e0e14;letter-spacing:-0.483px">DEPLOYMENTS</span>
<span class="t" id="h6" style="left:1275.00px;top:626.4px;font-size:22.88px;line-height:22.88px;font-weight:700;color:#0e0e14;letter-spacing:-0.361px">START DATE</span>
<span class="t" id="h7" style="left:1600.00px;top:626.4px;font-size:22.88px;line-height:22.88px;font-weight:700;color:#0e0e14;letter-spacing:-0.555px">END DATE</span>
<span class="t" id="h8" style="left:1924.00px;top:626.4px;font-size:22.88px;line-height:22.88px;font-weight:700;color:#0e0e14;letter-spacing:-0.261px">LEAD TIME</span>
<span class="t rg" id="r1" style="left:67.00px;top:744.3px;font-size:27.3px;line-height:27.3px;font-weight:400;color:#0b0b0d;letter-spacing:0.905px">TC-2377</span>
<span class="t rg" id="r3" style="left:798.00px;top:744.7px;font-size:26.78px;line-height:26.78px;font-weight:400;color:#0b0b0d;letter-spacing:-0.865px">4 PRs</span>
<span class="t rg" id="r4" style="left:970.00px;top:744.3px;font-size:27.3px;line-height:27.3px;font-weight:400;color:#0b0b0d;letter-spacing:0.333px">27 Builds</span>
<span class="t rg" id="r6a" style="left:1276.00px;top:744.3px;font-size:27.3px;line-height:27.3px;font-weight:400;color:#0b0b0d;letter-spacing:2.053px">2025-09-04</span>
<span class="t rg" id="r6b" style="left:1443.00px;top:744.3px;font-size:27.3px;line-height:27.3px;font-weight:400;color:#0b0b0d;letter-spacing:1.055px">14:57:22</span>
<span class="t rg" id="r7a" style="left:1600.00px;top:744.3px;font-size:27.3px;line-height:27.3px;font-weight:400;color:#0b0b0d;letter-spacing:2.055px">2025-09-15</span>
<span class="t rg" id="r7b" style="left:1767.00px;top:744.3px;font-size:27.3px;line-height:27.3px;font-weight:400;color:#0b0b0d;letter-spacing:1.326px">19:11:39</span>
<span class="t rg" id="r8" style="left:1924.00px;top:763.1px;font-size:29.4px;line-height:29.4px;font-weight:400;color:#6b6d85;letter-spacing:1.721px">29d 11h</span>
<span class="t" id="n1" style="left:149.00px;top:867.7px;font-size:22.88px;line-height:22.88px;font-weight:700;color:#0e0e14;letter-spacing:-0.761px">PR NUMBER</span>
<span class="t" id="n2" style="left:463.00px;top:867.7px;font-size:22.88px;line-height:22.88px;font-weight:700;color:#0e0e14;letter-spacing:-0.480px">PR TITLE</span>
<span class="t" id="n3" style="left:1195.00px;top:867.7px;font-size:22.88px;line-height:22.88px;font-weight:700;color:#0e0e14;letter-spacing:-0.582px">PR CREATED AT</span>
<span class="t" id="n4" style="left:1509.00px;top:867.7px;font-size:22.88px;line-height:22.88px;font-weight:700;color:#0e0e14;letter-spacing:-0.678px">PR MERGED AT</span>
<span class="t" id="n5a" style="left:1823.00px;top:867.7px;font-size:22.88px;line-height:22.88px;font-weight:700;color:#0e0e14;letter-spacing:-0.881px">PR MERGED</span>
<span class="t" id="n5b" style="left:1823.00px;top:894.3px;font-size:22.88px;line-height:22.88px;font-weight:700;color:#0e0e14;letter-spacing:-0.350px">BRANCH</span>
<span class="t rg" id="p0n" style="left:154.00px;top:988.4px;font-size:27.3px;line-height:27.3px;font-weight:400;color:#0b0b0d;letter-spacing:1.981px">233</span>
<span class="t rg" id="p0t" style="left:467.00px;top:988.4px;font-size:27.3px;line-height:27.3px;font-weight:400;color:#0b0b0d;letter-spacing:1.279px">[TC-2377]</span>
<span class="t rg" id="p0ca" style="left:1196.00px;top:988.4px;font-size:27.3px;line-height:27.3px;font-weight:400;color:#0b0b0d;letter-spacing:1.947px">2025-09-02</span>
<span class="t rg" id="p0cb" style="left:1364.00px;top:988.4px;font-size:27.3px;line-height:27.3px;font-weight:400;color:#0b0b0d;letter-spacing:0.423px">13:14:...</span>
<span class="t rg" id="p0ma" style="left:1509.00px;top:988.4px;font-size:27.3px;line-height:27.3px;font-weight:400;color:#0b0b0d;letter-spacing:1.947px">2025-09-02</span>
<span class="t rg" id="p0mb" style="left:1677.00px;top:988.4px;font-size:27.3px;line-height:27.3px;font-weight:400;color:#0b0b0d;letter-spacing:0.423px">13:14:...</span>
<span class="t rg" id="p1n" style="left:152.00px;top:1081.9px;font-size:27.3px;line-height:27.3px;font-weight:400;color:#0b0b0d;letter-spacing:2.481px">232</span>
<span class="t rg" id="p1t" style="left:465.00px;top:1081.9px;font-size:27.3px;line-height:27.3px;font-weight:400;color:#0b0b0d;letter-spacing:1.279px">[TC-2377]</span>
<span class="t rg" id="p1ca" style="left:1196.00px;top:1081.9px;font-size:27.3px;line-height:27.3px;font-weight:400;color:#0b0b0d;letter-spacing:1.947px">2025-09-02</span>
<span class="t rg" id="p1cb" style="left:1364.00px;top:1081.9px;font-size:27.3px;line-height:27.3px;font-weight:400;color:#0b0b0d;letter-spacing:0.423px">13:14:...</span>
<span class="t rg" id="p1ma" style="left:1510.00px;top:1081.9px;font-size:27.3px;line-height:27.3px;font-weight:400;color:#0b0b0d;letter-spacing:1.947px">2025-09-02</span>
<span class="t rg" id="p1mb" style="left:1678.00px;top:1081.9px;font-size:27.3px;line-height:27.3px;font-weight:400;color:#0b0b0d;letter-spacing:0.423px">13:14:...</span>
<span class="t rg" id="p2n" style="left:152.00px;top:1174.4px;font-size:27.3px;line-height:27.3px;font-weight:400;color:#0b0b0d;letter-spacing:1.981px">231</span>
<span class="t rg" id="p2t" style="left:465.00px;top:1174.4px;font-size:27.3px;line-height:27.3px;font-weight:400;color:#0b0b0d;letter-spacing:1.279px">[TC-2377]</span>
<span class="t rg" id="p2ca" style="left:1196.00px;top:1174.4px;font-size:27.3px;line-height:27.3px;font-weight:400;color:#0b0b0d;letter-spacing:1.947px">2025-09-02</span>
<span class="t rg" id="p2cb" style="left:1365.50px;top:1174.4px;font-size:27.3px;line-height:27.3px;font-weight:400;color:#0b0b0d;letter-spacing:0.173px">07:29:...</span>
<span class="t rg" id="p2ma" style="left:1510.00px;top:1174.4px;font-size:27.3px;line-height:27.3px;font-weight:400;color:#0b0b0d;letter-spacing:1.947px">2025-09-02</span>
<span class="t rg" id="p2mb" style="left:1679.50px;top:1174.4px;font-size:27.3px;line-height:27.3px;font-weight:400;color:#0b0b0d;letter-spacing:0.173px">07:29:...</span>
<span class="t rg" id="p3n" style="left:154.00px;top:1268.4px;font-size:27.3px;line-height:27.3px;font-weight:400;color:#0b0b0d;letter-spacing:1.981px">230</span>
<span class="t rg" id="p3t" style="left:467.00px;top:1268.4px;font-size:27.3px;line-height:27.3px;font-weight:400;color:#0b0b0d;letter-spacing:1.279px">[TC-2377]</span>
<span class="t rg" id="p3ca" style="left:1196.00px;top:1268.4px;font-size:27.3px;line-height:27.3px;font-weight:400;color:#0b0b0d;letter-spacing:1.947px">2025-08-25</span>
<span class="t rg" id="p3cb" style="left:1364.00px;top:1268.4px;font-size:27.3px;line-height:27.3px;font-weight:400;color:#0b0b0d;letter-spacing:0.423px">10:50:...</span>
<span class="t rg" id="p3m" style="left:1508.00px;top:1268.8px;font-size:26.78px;line-height:26.78px;font-weight:400;color:#0b0b0d;letter-spacing:1.208px">NA</span>
<span class="t" id="e2" style="left:1141.00px;top:1177.6px;font-size:23.52px;line-height:23.52px;font-weight:700;color:#0b0b0d;letter-spacing:0.806px">...</span>
<span class="t" id="e3" style="left:1142.00px;top:1271.6px;font-size:23.52px;line-height:23.52px;font-weight:700;color:#0b0b0d;letter-spacing:0.806px">...</span>
</div>
</div>
</body>
</html>
